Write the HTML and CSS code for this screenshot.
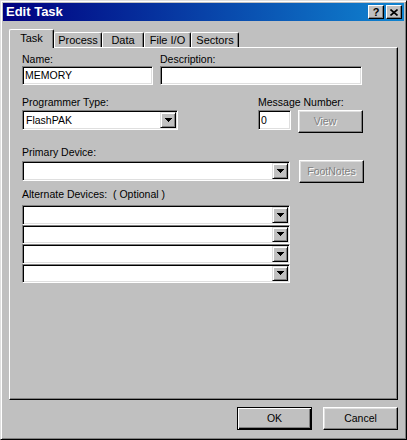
FILE: index.html
```html
<!DOCTYPE html>
<html>
<head>
<meta charset="utf-8">
<title>Edit Task</title>
<link rel="stylesheet" href="styles.css">
</head>
<body>
<div class="window">
  <div class="titlebar">
    <span class="title">Edit Task</span>
    <div class="caption-btns">
      <div class="cbtn help">?</div>
      <div class="cbtn close">
        <svg width="8" height="7" viewBox="0 0 8 7"><path d="M0.5 0.5 L7.5 6.5 M7.5 0.5 L0.5 6.5" stroke="#000" stroke-width="1.6" fill="none"/></svg>
      </div>
    </div>
  </div>
  <div class="body">
    <div class="tabs">
      <div class="tab active t-task">Task</div>
      <div class="tab t-process">Process</div>
      <div class="tab t-data">Data</div>
      <div class="tab t-file">File I/O</div>
      <div class="tab t-sectors">Sectors</div>
    </div>
    <div class="panel">
      <div class="row r1">
        <div class="field w-name">
          <div class="label">Name:</div>
          <div class="edit sunken h19">MEMORY</div>
        </div>
        <div class="field w-desc">
          <div class="label">Description:</div>
          <div class="edit sunken h19"></div>
        </div>
      </div>
      <div class="row r2">
        <div class="field w-prog">
          <div class="label l14">Programmer Type:</div>
          <div class="combo sunken">
            <div class="combo-text">FlashPAK</div>
            <div class="ddbtn"><svg width="7" height="4" viewBox="0 0 7 4"><rect x="0" y="0" width="7" height="1"/><rect x="1" y="1" width="5" height="1"/><rect x="2" y="2" width="3" height="1"/><rect x="3" y="3" width="1" height="1"/></svg></div>
          </div>
        </div>
        <div class="field w-msg">
          <div class="label l14 nowrap">Message Number:</div>
          <div class="edit sunken h20">0</div>
        </div>
        <div class="btn disabled side view">View</div>
      </div>
      <div class="row r3">
        <div class="field w-dev">
          <div class="label l14">Primary Device:</div>
          <div class="combo sunken dev">
            <div class="combo-text"></div>
            <div class="ddbtn"><svg width="7" height="4" viewBox="0 0 7 4"><rect x="0" y="0" width="7" height="1"/><rect x="1" y="1" width="5" height="1"/><rect x="2" y="2" width="3" height="1"/><rect x="3" y="3" width="1" height="1"/></svg></div>
          </div>
        </div>
        <div class="btn disabled side2">FootNotes</div>
      </div>
      <div class="row r4">
        <div class="field w-dev">
          <div class="label l17">Alternate Devices:&nbsp; ( Optional )</div>
          <div class="combo sunken alt">
            <div class="combo-text"></div>
            <div class="ddbtn"><svg width="7" height="4" viewBox="0 0 7 4"><rect x="0" y="0" width="7" height="1"/><rect x="1" y="1" width="5" height="1"/><rect x="2" y="2" width="3" height="1"/><rect x="3" y="3" width="1" height="1"/></svg></div>
          </div>
          <div class="combo sunken alt">
            <div class="combo-text"></div>
            <div class="ddbtn"><svg width="7" height="4" viewBox="0 0 7 4"><rect x="0" y="0" width="7" height="1"/><rect x="1" y="1" width="5" height="1"/><rect x="2" y="2" width="3" height="1"/><rect x="3" y="3" width="1" height="1"/></svg></div>
          </div>
          <div class="combo sunken alt">
            <div class="combo-text"></div>
            <div class="ddbtn"><svg width="7" height="4" viewBox="0 0 7 4"><rect x="0" y="0" width="7" height="1"/><rect x="1" y="1" width="5" height="1"/><rect x="2" y="2" width="3" height="1"/><rect x="3" y="3" width="1" height="1"/></svg></div>
          </div>
          <div class="combo sunken alt">
            <div class="combo-text"></div>
            <div class="ddbtn"><svg width="7" height="4" viewBox="0 0 7 4"><rect x="0" y="0" width="7" height="1"/><rect x="1" y="1" width="5" height="1"/><rect x="2" y="2" width="3" height="1"/><rect x="3" y="3" width="1" height="1"/></svg></div>
          </div>
        </div>
      </div>
    </div>
    <div class="buttons">
      <div class="btn default">OK</div>
      <div class="btn">Cancel</div>
    </div>
  </div>
</div>
</body>
</html>
```

FILE: styles.css
```css
* { box-sizing: border-box; }
html, body { margin: 0; padding: 0; }
body {
  background: #c0c0c0;
  font-family: "Liberation Sans", Arial, sans-serif;
  font-size: 10.5px;
  color: #000;
}
.window {
  width: 407px;
  height: 440px;
  background: #c0c0c0;
  border: 1px solid;
  border-color: #dfdfdf #000 #000 #dfdfdf;
  box-shadow: inset 1px 1px #fff, inset -1px -1px #808080;
  padding: 2px;
  display: flex;
  flex-direction: column;
}
.titlebar {
  height: 18px;
  flex: none;
  background: linear-gradient(to right, #000080, #1084d0);
  display: flex;
  align-items: center;
  justify-content: space-between;
  padding: 0 2px 0 3px;
}
.title {
  color: #fff;
  font-weight: bold;
  font-size: 13px;
  line-height: 14px;
}
.caption-btns { display: flex; gap: 2px; }
.cbtn {
  width: 16px;
  height: 14px;
  background: #c0c0c0;
  border: 1px solid;
  border-color: #fff #000 #000 #fff;
  box-shadow: inset -1px -1px #808080;
  display: flex;
  align-items: center;
  justify-content: center;
}
.cbtn.help {
  font-weight: bold;
  font-size: 11px;
  line-height: 11px;
  padding-top: 1px;
}
.cbtn svg { display: block; }
.body {
  flex: 1;
  padding: 8px 6px 0 6px;
  display: flex;
  flex-direction: column;
}
.tabs {
  height: 18px;
  display: flex;
  align-items: flex-end;
}
.tab {
  height: 15px;
  padding: 1px 0 0 0;
  text-align: center;
  line-height: 13px;
  font-size: 11px;
  border-left: 1px solid #fff;
  border-top: 1px solid #fff;
  border-right: 1px solid #000;
  border-radius: 2px 2px 0 0;
  box-shadow: inset -1px 0 #808080;
}
.tab.active {
  height: 19px;
  margin-bottom: -1px;
  padding-top: 2px;
  background: #c0c0c0;
  position: relative;
  z-index: 1;
}
.t-task { width: 45px; }
.t-process { width: 48px; }
.t-data { width: 42px; }
.t-file { width: 47px; }
.t-sectors { width: 48px; }
.panel {
  height: 353px;
  flex: none;
  border: 1px solid;
  border-color: #fff #000 #000 #fff;
  box-shadow: inset -1px -1px #808080;
  padding: 0 0 0 12px;
}
.row { display: flex; align-items: flex-start; }
.r1 { margin-top: 5px; }
.r2 { margin-top: 11px; }
.r3 { margin-top: 13px; }
.r4 { margin-top: 5px; }
.field { display: flex; flex-direction: column; }
.label { line-height: 13px; height: 13px; white-space: nowrap; }
.l14 { height: 14px; }
.l17 { height: 17px; }
.w-name { width: 131px; }
.w-desc { width: 202px; margin-left: 7px; }
.w-prog { width: 156px; }
.w-msg { width: 33px; margin-left: 80px; }
.w-dev { width: 268px; }
.sunken {
  background: #fff;
  border: 1px solid;
  border-color: #808080 #fff #fff #808080;
  box-shadow: inset 1px 1px #000, inset -1px -1px #dfdfdf;
}
.edit {
  padding-left: 2px;
  line-height: 17px;
  white-space: nowrap;
  overflow: hidden;
}
.h19 { height: 19px; }
.h20 { height: 20px; line-height: 18px; }
.combo {
  height: 20px;
  display: flex;
}
.combo.dev { margin-top: 1px; }
.combo.alt { height: 19.5px; }
.combo-text {
  flex: 1;
  padding-left: 3px;
  line-height: 18px;
}
.ddbtn {
  width: 16px;
  margin: 1px;
  background: #c0c0c0;
  border: 1px solid;
  border-color: #dfdfdf #000 #000 #dfdfdf;
  box-shadow: inset 1px 1px #fff, inset -1px -1px #808080;
  display: flex;
  align-items: center;
  justify-content: center;
}
.ddbtn svg { display: block; fill: #000; }
.btn {
  width: 75px;
  height: 23px;
  background: #c0c0c0;
  border: 1px solid;
  border-color: #fff #000 #000 #fff;
  box-shadow: inset -1px -1px #808080, inset 1px 1px #dfdfdf;
  display: flex;
  align-items: center;
  justify-content: center;
  line-height: 13px;
}
.btn.default {
  border-color: #000;
  box-shadow: inset 1px 1px #fff, inset -1px -1px #000, inset -2px -2px #808080;
}
.btn.disabled {
  color: #808080;
  text-shadow: 1px 1px 0 #fff;
  width: 65px;
}
.side { margin-top: 14px; margin-left: 7px; }
.view { padding-right: 11px; }
.side2 { margin-top: 14px; margin-left: 9px; }
.buttons {
  display: flex;
  justify-content: flex-end;
  gap: 11px;
  margin-top: 7px;
}
```
